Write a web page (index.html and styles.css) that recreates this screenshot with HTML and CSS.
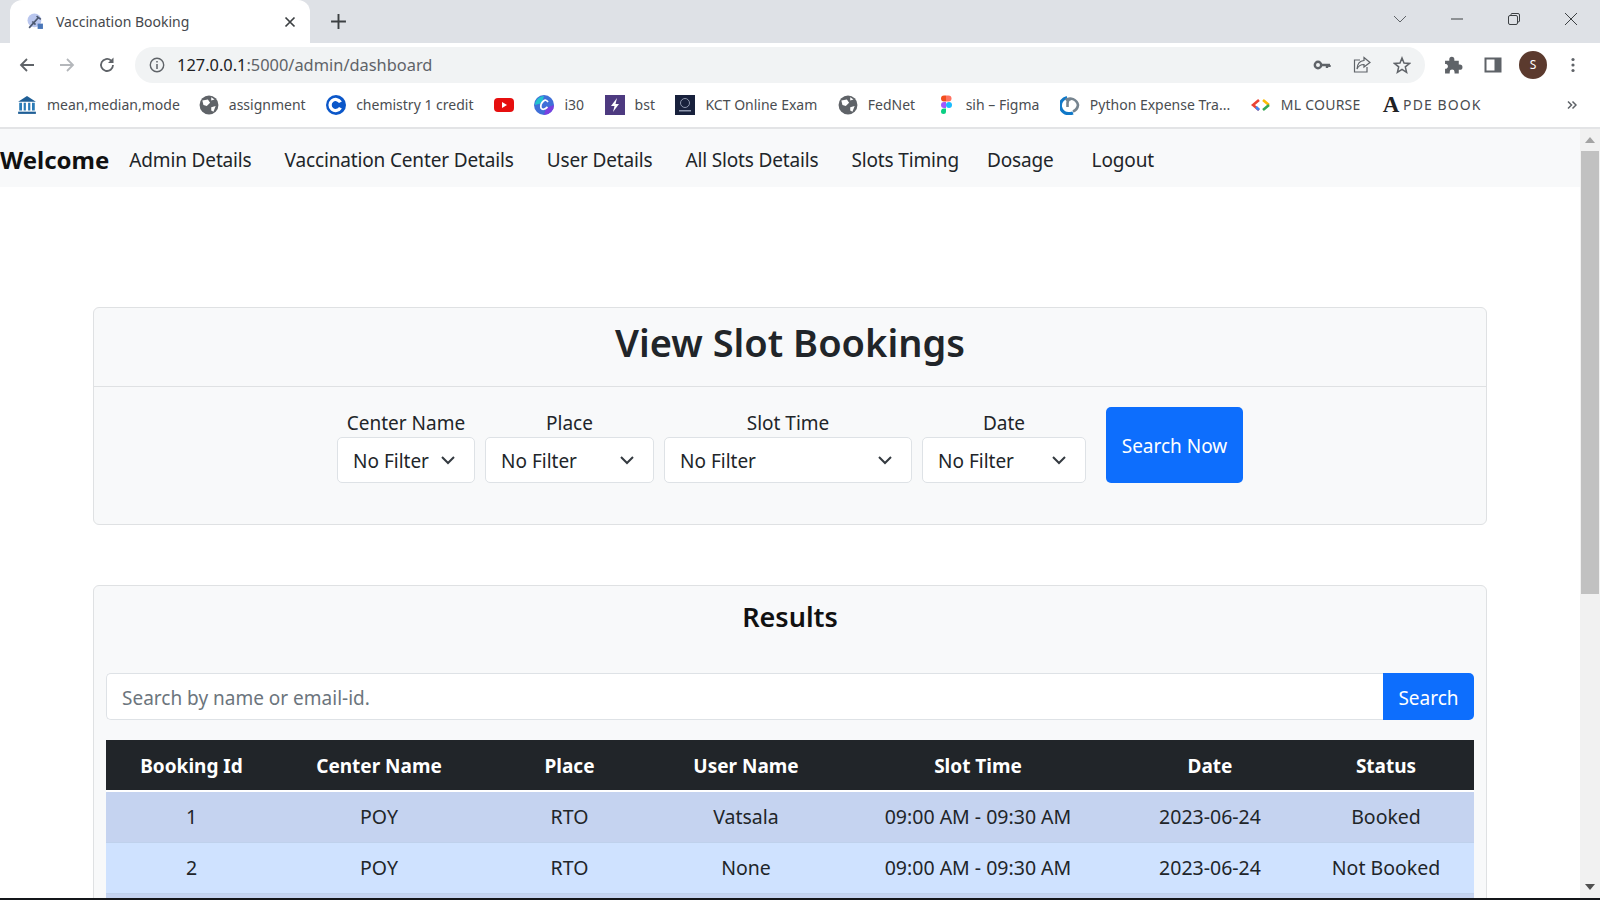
FILE: index.html
```html
<!DOCTYPE html>
<html lang="en">
<head>
    <meta charset="UTF-8">
    <meta name="viewport" content="width=device-width, initial-scale=1.0">
    <title>Vaccination Booking</title>
    <link rel="stylesheet" href="styles.css">
</head>
<body>

<!-- Browser chrome -->
<div class="tabstrip">
    <div class="tab">
        <svg class="tab-icon" viewBox="0 0 16 16"><circle cx="7" cy="7" r="6.5" fill="#b9c6ee"/><path d="M2 14 L11 4 M9 3 L13 6 M5 8 L8 11" stroke="#4c5870" stroke-width="1.6" fill="none"/><rect x="10" y="10" width="5" height="5" fill="#4a76b8"/></svg>
        <span class="tab-title">Vaccination Booking</span>
        <svg class="tab-close" viewBox="0 0 12 12"><path d="M1.5 1.5 L10.5 10.5 M10.5 1.5 L1.5 10.5" stroke="#3c4043" stroke-width="1.7"/></svg>
    </div>
    <svg class="new-tab" viewBox="0 0 16 16"><path d="M8 1 V15 M1 8 H15" stroke="#3c4043" stroke-width="1.8"/></svg>
    <div class="window-controls">
        <svg class="win-chevron" viewBox="0 0 14 8"><path d="M1 1 L7 7 L13 1" stroke="#5f6368" stroke-width="1" fill="none"/></svg>
        <svg class="win-btn" viewBox="0 0 14 14"><path d="M1 7 H13" stroke="#3c4043" stroke-width="1"/></svg>
        <svg class="win-btn" viewBox="0 0 14 14"><rect x="1.5" y="3.5" width="9" height="9" rx="1.5" stroke="#3c4043" fill="none"/><path d="M4 3.5 V2.5 Q4 1.5 5 1.5 H11 Q12.5 1.5 12.5 3 V9 Q12.5 10 11 10" stroke="#3c4043" fill="none"/></svg>
        <svg class="win-btn" viewBox="0 0 14 14"><path d="M1 1 L13 13 M13 1 L1 13" stroke="#3c4043" stroke-width="1"/></svg>
    </div>
</div>

<div class="toolbar">
    <svg class="tool-icon" viewBox="0 0 18 18"><path d="M16 9 H3 M9 3 L3 9 L9 15" stroke="#5f6368" stroke-width="1.8" fill="none"/></svg>
    <svg class="tool-icon" viewBox="0 0 18 18"><path d="M2 9 H15 M9 3 L15 9 L9 15" stroke="#b4b7bb" stroke-width="1.8" fill="none"/></svg>
    <svg class="tool-icon" viewBox="0 0 18 18"><path d="M15 9 A6 6 0 1 1 13 4.5" stroke="#5f6368" stroke-width="1.8" fill="none"/><path d="M15.5 1.5 V7 H10 Z" fill="#5f6368"/></svg>
    <div class="omnibox">
        <svg class="info-icon" viewBox="0 0 16 16"><circle cx="8" cy="8" r="6.7" stroke="#5f6368" stroke-width="1.4" fill="none"/><path d="M8 7 V12 M8 4 V5.6" stroke="#5f6368" stroke-width="1.5"/></svg>
        <span class="url"><span class="url-host">127.0.0.1</span>:5000/admin/dashboard</span>
        <div class="omni-actions">
            <svg class="omni-icon" viewBox="0 0 18 18"><circle cx="5" cy="9" r="3.2" stroke="#5f6368" stroke-width="2.4" fill="none"/><path d="M8 9 H17 M14 9 V12 M16.5 9 V11" stroke="#5f6368" stroke-width="2.4"/></svg>
            <svg class="omni-icon" viewBox="0 0 18 18"><path d="M7 4 H1.5 V16 H14 V11" stroke="#5f6368" stroke-width="1.2" fill="none"/><path d="M11 1.5 L17 6.5 L11 11 V8.5 Q6 8.5 4 13 Q4.5 5 11 4.5 Z" stroke="#5f6368" stroke-width="1.2" fill="none"/></svg>
            <svg class="omni-icon" viewBox="0 0 18 18"><path d="M9 2 L11 7 L16.5 7.4 L12.3 10.9 L13.6 16.3 L9 13.4 L4.4 16.3 L5.7 10.9 L1.5 7.4 L7 7 Z" stroke="#5f6368" stroke-width="1.5" fill="none"/></svg>
        </div>
    </div>
    <svg class="tool-icon puzzle" viewBox="0 0 18 18"><path d="M1 5.5 H5 V4 A2.4 2.4 0 0 1 9.8 4 V5.5 H14 V9 H15 A2.5 2.5 0 0 1 15 14 H14 V17.5 H10 V16 A2.3 2.3 0 0 0 5.4 16 V17.5 H1 V13 H2.2 A2.4 2.4 0 0 0 2.2 8.5 H1 Z" fill="#5f6368"/></svg>
    <svg class="tool-icon" viewBox="0 0 18 18"><rect x="1.5" y="2.5" width="15" height="13" stroke="#5f6368" stroke-width="2" fill="none"/><rect x="10.5" y="2.5" width="6" height="13" fill="#5f6368"/></svg>
    <div class="avatar">S</div>
    <svg class="tool-icon" viewBox="0 0 18 18"><circle cx="9" cy="3.5" r="1.6" fill="#5f6368"/><circle cx="9" cy="9" r="1.6" fill="#5f6368"/><circle cx="9" cy="14.5" r="1.6" fill="#5f6368"/></svg>
</div>

<div class="bookmarks">
    <span class="bm bm-first"><svg viewBox="0 0 18 18"><path d="M9 1 L17 6 H1 Z" fill="#1f5f96"/><path d="M2 7 H4.5 V14 H2 Z M6 7 H8 V14 H6 Z M10 7 H12 V14 H10 Z M13.5 7 H16 V14 H13.5 Z" fill="#2b7cb8"/><rect x="1" y="15" width="16" height="2" fill="#1f5f96"/></svg>mean,median,mode</span>
    <span class="bm"><svg viewBox="0 0 18 18"><circle cx="9" cy="9" r="8.5" fill="#5f6368"/><path d="M3 5 L8 4 L10 7 L7 10 L4 9 Z M11 11 L15 10 L13 15 L11 14 Z M11 2 L14 4 L11 5 Z" fill="#fff"/></svg>assignment</span>
    <span class="bm"><svg viewBox="0 0 18 18"><circle cx="9" cy="9" r="9" fill="#0b57c9"/><path d="M13 6.5 A5 5 0 1 0 13 11.5" stroke="#fff" stroke-width="3" fill="none"/></svg>chemistry 1 credit</span>
    <span class="bm bm-only"><svg viewBox="0 0 20 18"><rect y="2" width="20" height="14" rx="4" fill="#e60f0f"/><path d="M8 6 L13 9 L8 12 Z" fill="#fff"/></svg></span>
    <span class="bm"><svg viewBox="0 0 20 20"><circle cx="10" cy="10" r="10" fill="#3f6fd8"/><path d="M1 10 A9 9 0 0 1 10 1 L8 8 Z" fill="#22c3cf"/><path d="M10 20 A10 10 0 0 0 20 10 L12 13 Z" fill="#7a3fe0"/><path d="M14 7 Q12 4 9.5 6 Q6 9 7 13 Q9 16 13.5 12" stroke="#fff" stroke-width="1.7" fill="none"/></svg>i30</span>
    <span class="bm"><svg viewBox="0 0 20 20"><rect width="20" height="20" fill="#4d3a80"/><path d="M12 3 L6 11 H9.5 L8 17 L14 9 H10.5 Z" fill="#fff"/></svg>bst</span>
    <span class="bm"><svg viewBox="0 0 20 20"><rect width="20" height="20" fill="#18213c"/><circle cx="10" cy="8" r="4.5" stroke="#8e97ad" fill="none"/><rect x="4" y="15" width="12" height="1.5" fill="#8e97ad"/></svg>KCT Online Exam</span>
    <span class="bm"><svg viewBox="0 0 18 18"><circle cx="9" cy="9" r="8.5" fill="#5f6368"/><path d="M3 5 L8 4 L10 7 L7 10 L4 9 Z M11 11 L15 10 L13 15 L11 14 Z M11 2 L14 4 L11 5 Z" fill="#fff"/></svg>FedNet</span>
    <span class="bm"><svg viewBox="0 0 14 20"><path d="M2 3.5 A3 3 0 0 1 5 0.5 H7 V6.5 H5 A3 3 0 0 1 2 3.5 Z" fill="#f24e1e"/><path d="M7 0.5 H9.5 A3 3 0 0 1 9.5 6.5 H7 Z" fill="#ff7262"/><path d="M2 10 A3 3 0 0 1 5 7 H7 V13 H5 A3 3 0 0 1 2 10 Z" fill="#a259ff"/><circle cx="10" cy="10" r="3" fill="#1abcfe"/><path d="M2 16.5 A3 3 0 0 1 5 13.5 H7 V16.5 A2.5 2.5 0 0 1 2 16.5 Z" fill="#0acf83"/></svg>sih – Figma</span>
    <span class="bm"><svg viewBox="0 0 20 20"><path d="M7 2.5 A8 8 0 0 0 10 18.5 A8 8 0 0 0 13 18" stroke="#0f78c8" stroke-width="3.2" fill="none"/><path d="M7.5 12 V8 A4 4 0 0 1 11 4 M5.5 5 A8 8 0 0 1 18 10 A8 8 0 0 1 13 16.5" stroke="#76848f" stroke-width="2.6" fill="none"/></svg>Python Expense Tra...</span>
    <span class="bm bm-caps"><svg viewBox="0 0 20 14"><path d="M8 2 L2 7 L8 12" stroke="#ea4335" stroke-width="2.6" fill="none"/><path d="M5 9 L8 12" stroke="#4285f4" stroke-width="2.6"/><path d="M12 2 L18 7" stroke="#fbbc04" stroke-width="2.6"/><path d="M18 7 L12 12" stroke="#34a853" stroke-width="2.6"/></svg>ML COURSE</span>
    <span class="bm bm-book"><span class="bm-letter">A</span>PDE BOOK</span>
    <svg class="bm-more" viewBox="0 0 10 10"><path d="M1 1.5 L4.5 5 L1 8.5 M5.5 1.5 L9 5 L5.5 8.5" stroke="#5f6368" stroke-width="1.5" fill="none"/></svg>
</div>

<!-- Page -->
<div class="viewport">
    <div class="page">
        <nav class="navbar">
            <a class="brand" href="#">Welcome</a>
            <a class="nav-link" href="#">Admin Details</a>
            <a class="nav-link" href="#">Vaccination Center Details</a>
            <a class="nav-link" href="#">User Details</a>
            <a class="nav-link" href="#">All Slots Details</a>
            <a class="nav-link nav-tight" href="#">Slots Timing</a>
            <a class="nav-link nav-wide" href="#">Dosage</a>
            <a class="nav-link" href="#">Logout</a>
        </nav>

        <section class="card filter-card">
            <h1 class="card-title">View Slot Bookings</h1>
            <form class="filters">
                <div class="filter">
                    <label>Center Name</label>
                    <div class="select select-center">No Filter<svg viewBox="0 0 16 16"><path d="M2 5 L8 11 L14 5" stroke="#343a40" stroke-width="2" fill="none"/></svg></div>
                </div>
                <div class="filter">
                    <label>Place</label>
                    <div class="select select-place">No Filter<svg viewBox="0 0 16 16"><path d="M2 5 L8 11 L14 5" stroke="#343a40" stroke-width="2" fill="none"/></svg></div>
                </div>
                <div class="filter">
                    <label>Slot Time</label>
                    <div class="select select-slot">No Filter<svg viewBox="0 0 16 16"><path d="M2 5 L8 11 L14 5" stroke="#343a40" stroke-width="2" fill="none"/></svg></div>
                </div>
                <div class="filter">
                    <label>Date</label>
                    <div class="select select-date">No Filter<svg viewBox="0 0 16 16"><path d="M2 5 L8 11 L14 5" stroke="#343a40" stroke-width="2" fill="none"/></svg></div>
                </div>
                <button class="btn search-now" type="button">Search Now</button>
            </form>
        </section>

        <section class="card results-card">
            <h2 class="results-title">Results</h2>
            <div class="search-row">
                <div class="search-input">Search by name or email-id.</div>
                <button class="btn search-btn" type="button">Search</button>
            </div>
            <table class="results">
                <thead>
                    <tr>
                        <th class="col-id">Booking Id</th>
                        <th class="col-center">Center Name</th>
                        <th class="col-place">Place</th>
                        <th class="col-user">User Name</th>
                        <th class="col-slot">Slot Time</th>
                        <th class="col-date">Date</th>
                        <th class="col-status">Status</th>
                    </tr>
                </thead>
                <tbody>
                    <tr class="row-odd"><td>1</td><td>POY</td><td>RTO</td><td>Vatsala</td><td>09:00 AM - 09:30 AM</td><td>2023-06-24</td><td>Booked</td></tr>
                    <tr><td>2</td><td>POY</td><td>RTO</td><td>None</td><td>09:00 AM - 09:30 AM</td><td>2023-06-24</td><td>Not Booked</td></tr>
                    <tr class="row-odd"><td></td><td></td><td></td><td></td><td></td><td></td><td></td></tr>
                </tbody>
            </table>
        </section>
    </div>

    <div class="scrollbar">
        <div class="scroll-arrow"><svg viewBox="0 0 10 6"><path d="M0 6 L5 0 L10 6 Z" fill="#a3a3a3"/></svg></div>
        <div class="scroll-track"><div class="scroll-thumb"></div></div>
        <div class="scroll-arrow"><svg viewBox="0 0 10 6"><path d="M0 0 L5 6 L10 0 Z" fill="#505050"/></svg></div>
    </div>
</div>
<div class="screen-edge"></div>

</body>
</html>
```

FILE: styles.css
```css
* {
    box-sizing: border-box;
}
html, body {
    margin: 0;
    height: 900px;
    overflow: hidden;
}
body {
    display: flex;
    flex-direction: column;
    width: 1600px;
    background-color: #fff;
    font-family: "Noto Sans", "Open Sans", sans-serif;
    color: #212529;
}

/* browser chrome */
.tabstrip {
    display: flex;
    align-items: center;
    height: 43px;
    flex: none;
    background-color: #dee1e6;
    padding-left: 10px;
}
.tab {
    display: flex;
    align-items: center;
    width: 300px;
    height: 43px;
    padding: 0 14px 0 17px;
    background-color: #fff;
    border-radius: 12px 12px 0 0;
}
.tab-icon {
    width: 17px;
    height: 17px;
    margin-right: 12px;
}
.tab-title {
    flex: 1;
    font-size: 14px;
    color: #45484c;
}
.tab-close {
    width: 12px;
    height: 12px;
}
.new-tab {
    width: 17px;
    height: 17px;
    margin-left: 20px;
}
.window-controls {
    display: flex;
    align-items: center;
    margin-left: auto;
    margin-top: -6px;
    padding-right: 22px;
}
.win-chevron {
    width: 14px;
    height: 8px;
    margin-right: 43px;
}
.win-btn {
    width: 14px;
    height: 14px;
    margin-left: 43px;
}
.win-btn:nth-child(2) {
    margin-left: 0;
}
.toolbar {
    display: flex;
    align-items: center;
    height: 43px;
    flex: none;
    padding: 0 18px;
    background-color: #fff;
}
.tool-icon {
    flex: none;
    width: 18px;
    height: 18px;
    margin-right: 22px;
}
.puzzle {
    width: 19px;
    height: 19px;
    margin-right: 21px;
}
.omnibox {
    display: flex;
    flex: none;
    align-items: center;
    width: 1290px;
    height: 36px;
    margin: 0 19px 0 -3px;
    padding: 0 14px;
    border-radius: 18px;
    background-color: #f1f3f4;
    font-size: 16.4px;
    color: #5f6368;
}
.info-icon {
    width: 16px;
    height: 16px;
    margin-right: 12px;
}
.url-host {
    color: #202124;
}
.omni-actions {
    display: flex;
    align-items: center;
    gap: 22px;
    margin-left: auto;
}
.omni-icon {
    width: 18px;
    height: 18px;
}
.avatar {
    display: flex;
    flex: none;
    align-items: center;
    justify-content: center;
    width: 28px;
    height: 28px;
    margin: 0 17px 0 -5px;
    border-radius: 50%;
    background-color: #5b3a2e;
    color: #fff;
    font-size: 12px;
}
.bookmarks {
    display: flex;
    align-items: center;
    gap: 20.5px;
    height: 43px;
    flex: none;
    padding: 0 23px 4px 17px;
    background-color: #fff;
    border-bottom: 2px solid #e3e4e6;
    font-size: 14px;
    color: #4a4d51;
    white-space: nowrap;
}
.bm {
    display: flex;
    align-items: center;
}
.bm svg {
    width: 20px;
    height: 20px;
    margin-right: 10px;
}
.bm-first {
    margin-right: -1.5px;
}
.bm-only svg {
    margin-right: 0;
}
.bm-caps {
    letter-spacing: 0.25px;
}
.bm-book {
    letter-spacing: 1.1px;
}
.bm-letter {
    width: 20px;
    margin-right: 2px;
    font-family: "Liberation Serif", serif;
    font-size: 23px;
    font-weight: bold;
    letter-spacing: 0;
    color: #202124;
    text-align: center;
}
.bm-more {
    width: 10px;
    height: 10px;
    margin-left: auto;
}

/* page content */
.viewport {
    display: flex;
    flex: 1;
    min-height: 0;
}
.page {
    flex: 1;
    min-width: 0;
    overflow: hidden;
    font-size: 19px;
}
.navbar {
    display: flex;
    align-items: center;
    height: 58px;
    padding-top: 3px;
    background-color: #f8f9fa;
}
.navbar a {
    color: #212529;
    text-decoration: none;
}
.navbar .brand {
    font-size: 24px;
    font-weight: 700;
    margin-right: 20px;
    color: #111;
}
.nav-link {
    margin-right: 33px;
    letter-spacing: -0.15px;
}
.nav-tight {
    margin-right: 28px;
}
.nav-wide {
    margin-right: 38px;
}
.card {
    margin: 0 93px;
    background-color: #f8f9fa;
    border: 1px solid #dfe1e3;
    border-radius: 6px;
}
.filter-card {
    height: 218px;
    margin-top: 120px;
}
.card-title {
    height: 79px;
    margin: 0;
    border-bottom: 1px solid #dfe1e3;
    font-size: 38px;
    font-weight: 600;
    line-height: 69px;
    text-align: center;
}
.filters {
    display: flex;
    justify-content: center;
    align-items: flex-end;
    gap: 10px;
    padding: 20px 0 0 0;
}
.filter {
    text-align: center;
}
.filter label {
    display: block;
    line-height: 32px;
    height: 30px;
}
.select {
    display: flex;
    align-items: center;
    justify-content: space-between;
    height: 46px;
    padding: 2px 18px 0 15px;
    background-color: #fff;
    border: 1px solid #dee2e6;
    border-radius: 5px;
    text-align: left;
}
.select svg {
    width: 16px;
    height: 16px;
    margin-top: -2px;
}
.select-center {
    width: 138px;
}
.select-place {
    width: 169px;
}
.select-slot {
    width: 248px;
}
.select-date {
    width: 164px;
}
.btn {
    border: none;
    border-radius: 5px;
    background-color: #0d6efd;
    color: #fff;
    font: inherit;
}
.search-now {
    width: 137px;
    height: 76px;
    margin-left: 10px;
    padding-top: 2px;
}
.results-card {
    margin-top: 60px;
    height: 400px;
    padding: 0 12px;
}
.results-title {
    margin: 0;
    padding-top: 12px;
    height: 87px;
    font-size: 27px;
    font-weight: 600;
    color: #111;
    text-align: center;
}
.search-row {
    display: flex;
    height: 47px;
}
.search-input {
    flex: 1;
    display: flex;
    align-items: center;
    padding: 2px 0 0 15px;
    background-color: #fff;
    border: 1px solid #dee2e6;
    border-right: none;
    border-radius: 5px 0 0 5px;
    color: #6c757d;
}
.search-btn {
    width: 91px;
    padding-top: 4px;
    border-radius: 0 5px 5px 0;
}
.results {
    width: 100%;
    margin-top: 20px;
    border-collapse: collapse;
    table-layout: fixed;
    font-size: 19.5px;
    text-align: center;
}
.results th {
    height: 51px;
    padding-top: 3px;
    background-color: #212529;
    border-bottom: 2px solid #fff;
    color: #fff;
    font-size: 19px;
    font-weight: 700;
}
.results td {
    height: 51px;
    background-color: #cfe2ff;
    border-bottom: 1px solid #bfd1ec;
}
.results .row-odd td {
    background-color: #c5d3f0;
}
.col-id {
    width: 171px;
}
.col-center {
    width: 204px;
}
.col-place {
    width: 177px;
}
.col-user {
    width: 176px;
}
.col-slot {
    width: 288px;
}
.col-date {
    width: 176px;
}

/* scrollbar */
.scrollbar {
    display: flex;
    flex-direction: column;
    width: 20px;
    flex: none;
    background-color: #f1f1f1;
}
.scroll-arrow {
    display: flex;
    align-items: center;
    justify-content: center;
    height: 22px;
    flex: none;
}
.scroll-arrow svg {
    width: 10px;
    height: 6px;
}
.scroll-track {
    flex: 1;
    padding: 0 1px;
}
.scroll-thumb {
    height: 443px;
    background-color: #c1c1c1;
}
.screen-edge {
    height: 2px;
    flex: none;
    background-color: #14161a;
}
```
